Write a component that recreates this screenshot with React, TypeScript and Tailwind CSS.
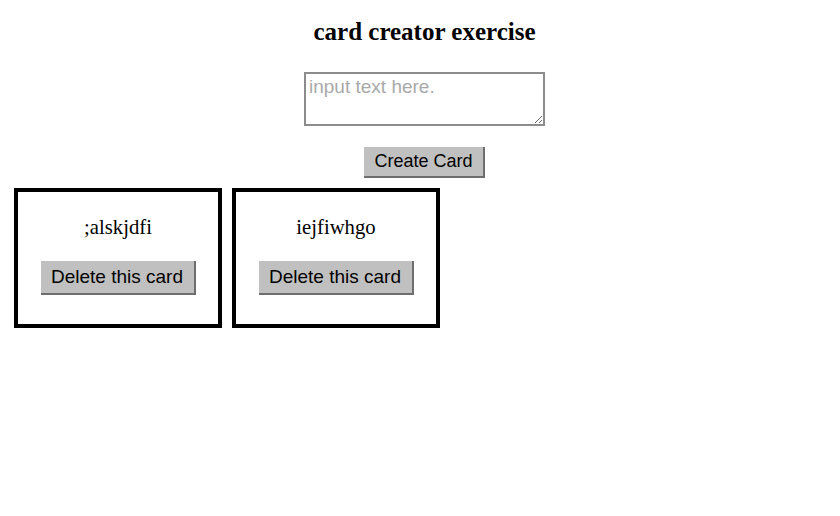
import React from "react";

const serif = { fontFamily: '"Liberation Serif", "Times New Roman", serif' };

function Card({ text }: { text: string }) {
  return (
    <div className="w-[208px] h-[140px] border-[4px] border-black flex flex-col items-center box-border">
      <p
        className="mt-[23px] text-[20.7px] leading-[24px] text-black"
        style={serif}
      >
        {text}
      </p>
      <button className="mt-[22px] w-[155px] h-[34px] bg-[#c0c0c0] border-r-2 border-b-2 border-[#6e6e6e] text-[19px] text-black font-['Liberation_Sans',Arial,sans-serif] flex items-center justify-center">
        Delete this card
      </button>
    </div>
  );
}

export default function App() {
  return (
    <div className="w-[840px] h-[516px] bg-white overflow-hidden">
      <div className="pl-[9px] flex flex-col items-center">
        <h1
          className="mt-[18px] text-[25px] leading-[28px] font-bold text-black"
          style={serif}
        >
          card creator exercise
        </h1>
        <textarea
          placeholder="input text here."
          className="mt-[26px] w-[241px] h-[54px] border-2 border-[#8c8c8c] pt-[2px] pl-[3px] text-[19px] leading-[22px] placeholder:text-[#a9a9a9] font-['Liberation_Sans',Arial,sans-serif] outline-none"
        />
        <button className="mt-[21px] w-[121px] h-[31px] bg-[#c0c0c0] border-r-2 border-b-2 border-[#6e6e6e] text-[18px] text-black font-['Liberation_Sans',Arial,sans-serif] flex items-center justify-center">
          Create Card
        </button>
      </div>
      <div className="mt-[10px] pl-[14px] flex gap-[10px]">
        <Card text=";alskjdfi" />
        <Card text="iejfiwhgo" />
      </div>
    </div>
  );
}
